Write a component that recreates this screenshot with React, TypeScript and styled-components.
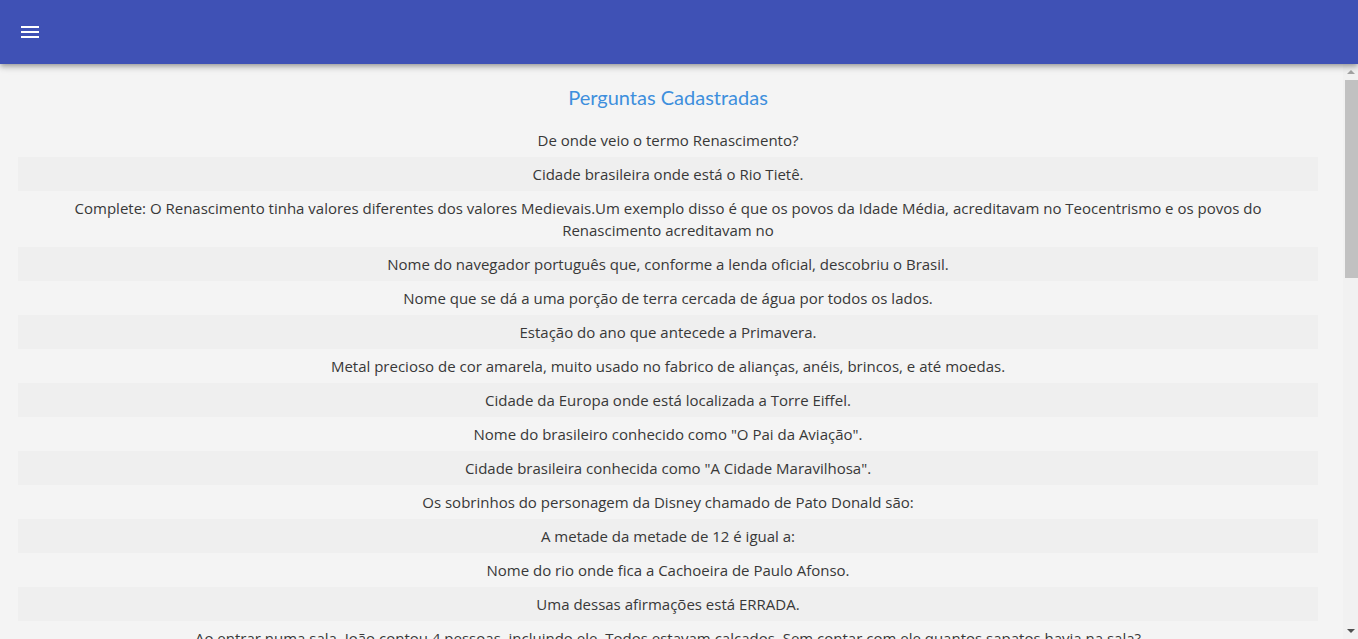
import styled, { createGlobalStyle } from "styled-components";

const GlobalStyle = createGlobalStyle`
  html, body {
    margin: 0;
    padding: 0;
    height: 100%;
    overflow: hidden;
  }
  body {
    font-family: "Open Sans", "Liberation Sans", sans-serif;
    background: #f4f4f4;
  }
  #root {
    height: 100%;
  }
`;

const Page = styled.div`
  display: flex;
  flex-direction: column;
  height: 100vh;
`;

const TopBar = styled.header`
  position: relative;
  z-index: 2;
  flex: 0 0 64px;
  display: flex;
  align-items: center;
  padding-left: 18px;
  background: #3f51b5;
  box-shadow: 0 2px 4px -1px rgba(0, 0, 0, 0.2), 0 4px 5px 0 rgba(0, 0, 0, 0.14),
    0 1px 10px 0 rgba(0, 0, 0, 0.12);
`;

const MenuButton = styled.button`
  display: flex;
  width: 24px;
  height: 24px;
  padding: 0;
  border: 0;
  background: none;
  cursor: pointer;
`;

const Body = styled.div`
  flex: 1;
  min-height: 0;
  display: flex;
`;

const Content = styled.main`
  flex: 1;
  overflow: hidden;
  background: #f4f4f4;
`;

const ScrollTrack = styled.div`
  flex: 0 0 15px;
  display: flex;
  flex-direction: column;
  background: #f1f1f1;
`;

const ScrollArrow = styled.div<{ $down?: boolean }>`
  flex: 0 0 16px;
  display: flex;
  align-items: center;
  justify-content: center;

  &::before {
    content: "";
    border-left: 4px solid transparent;
    border-right: 4px solid transparent;
    ${(p) =>
      p.$down
        ? "border-top: 4px solid #505050;"
        : "border-bottom: 4px solid #a3a3a3;"}
  }
`;

const ScrollArea = styled.div`
  flex: 1;
`;

const ScrollThumb = styled.div`
  margin-left: 2px;
  height: 198px;
  background: #c1c1c1;
`;

const Wrapper = styled.section`
  margin: 0 25px 0 18px;
  padding-top: 21px;
`;

const Title = styled.h2`
  margin: 0 0 14px;
  font-family: Lato, "Open Sans", sans-serif;
  font-size: 20px;
  line-height: 24px;
  font-weight: 400;
  color: #3e8fdd;
  text-align: center;
`;

const QuestionList = styled.ul`
  margin: 0;
  padding: 0;
  list-style: none;
`;

const QuestionRow = styled.li<{ $striped: boolean }>`
  padding: 6px 20px;
  font-size: 15px;
  line-height: 22px;
  color: #383838;
  text-align: center;
  background: ${(p) => (p.$striped ? "#efefef" : "transparent")};
`;

const perguntas = [
  "De onde veio o termo Renascimento?",
  "Cidade brasileira onde está o Rio Tietê.",
  "Complete: O Renascimento tinha valores diferentes dos valores Medievais.Um exemplo disso é que os povos da Idade Média, acreditavam no Teocentrismo e os povos do Renascimento acreditavam no",
  "Nome do navegador português que, conforme a lenda oficial, descobriu o Brasil.",
  "Nome que se dá a uma porção de terra cercada de água por todos os lados.",
  "Estação do ano que antecede a Primavera.",
  "Metal precioso de cor amarela, muito usado no fabrico de alianças, anéis, brincos, e até moedas.",
  "Cidade da Europa onde está localizada a Torre Eiffel.",
  'Nome do brasileiro conhecido como "O Pai da Aviação".',
  'Cidade brasileira conhecida como "A Cidade Maravilhosa".',
  "Os sobrinhos do personagem da Disney chamado de Pato Donald são:",
  "A metade da metade de 12 é igual a:",
  "Nome do rio onde fica a Cachoeira de Paulo Afonso.",
  "Uma dessas afirmações está ERRADA.",
  "Ao entrar numa sala, João contou 4 pessoas, incluindo ele. Todos estavam calçados. Sem contar com ele quantos sapatos havia na sala?",
];

const MenuIcon = () => (
  <svg width="24" height="24" viewBox="0 0 24 24" fill="#fff">
    <path d="M3 18h18v-2H3v2zm0-5h18v-2H3v2zm0-7v2h18V6H3z" />
  </svg>
);

export default function App() {
  return (
    <Page>
      <GlobalStyle />
      <TopBar>
        <MenuButton aria-label="menu">
          <MenuIcon />
        </MenuButton>
      </TopBar>
      <Body>
        <Content>
          <Wrapper>
            <Title>Perguntas Cadastradas</Title>
            <QuestionList>
              {perguntas.map((p, i) => (
                <QuestionRow key={i} $striped={i % 2 === 1}>
                  {p}
                </QuestionRow>
              ))}
            </QuestionList>
          </Wrapper>
        </Content>
        <ScrollTrack aria-hidden>
          <ScrollArrow />
          <ScrollArea>
            <ScrollThumb />
          </ScrollArea>
          <ScrollArrow $down />
        </ScrollTrack>
      </Body>
    </Page>
  );
}
